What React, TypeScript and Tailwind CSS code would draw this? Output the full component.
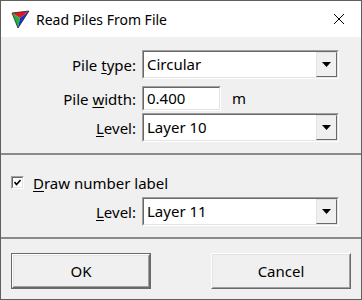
import React from "react";

const font = { fontFamily: '"Noto Sans", "Open Sans", sans-serif' };

function Combo({ value }: { value: string }) {
  return (
    <div className="w-[197px] h-[29px] border border-t-[#a0a0a0] border-l-[#a0a0a0] border-b-white border-r-white">
      <div className="w-full h-full border border-t-[#696969] border-l-[#696969] border-b-[#e3e3e3] border-r-[#e3e3e3] bg-white flex">
        <div className="flex-1 flex items-center pl-[3px] text-[15px] text-black">{value}</div>
        <div className="w-[21px] h-full bg-[#f0f0f0] border border-t-[#e3e3e3] border-l-[#e3e3e3] border-b-[#696969] border-r-[#696969] flex items-center justify-center">
          <svg width="9" height="5" viewBox="0 0 9 5">
            <polygon points="0,0 9,0 4.5,5" fill="#000" />
          </svg>
        </div>
      </div>
    </div>
  );
}

function Label({ first, u, rest }: { first: string; u: string; rest: string }) {
  return (
    <span className="text-[15px] text-black whitespace-pre">
      {first}
      <span className="underline underline-offset-2">{u}</span>
      {rest}
    </span>
  );
}

function Sep() {
  return (
    <div className="flex flex-col">
      <div className="h-px bg-[#8a8a8a]" />
      <div className="h-px bg-[#8a8a8a]" />
    </div>
  );
}

export default function App() {
  return (
    <div style={font} className="w-[362px] h-[300px] border border-[#5f5f5f] flex flex-col bg-[#f0f0f0] overflow-hidden">
      {/* Title bar */}
      <div className="h-[36px] bg-white flex items-center">
        <div className="ml-[10px] w-[19px] h-[19px]">
          <svg width="19" height="19" viewBox="0 0 19 19">
            <polygon points="1,3 18,1 9,8" fill="#e8141b" />
            <polygon points="1,3 9,8 7,18" fill="#1fb53b" />
            <polygon points="18,1 9,8 7,18" fill="#1c2fd6" />
            <polygon points="1,3 18,1 7,18" fill="none" stroke="#222" strokeWidth="0.8" />
          </svg>
        </div>
        <span className="ml-[6px] text-[14px] text-black">Read Piles From File</span>
        <div className="ml-auto mr-[16px] w-[12px] h-[12px]">
          <svg width="12" height="12" viewBox="0 0 12 12">
            <line x1="1" y1="1" x2="11" y2="11" stroke="#000" strokeWidth="1" />
            <line x1="11" y1="1" x2="1" y2="11" stroke="#000" strokeWidth="1" />
          </svg>
        </div>
      </div>

      {/* Section 1 */}
      <div className="h-[116px] pt-[13px] flex flex-col">
        <div className="flex items-center">
          <div className="w-[135px] text-right"><Label first="Pile " u="t" rest="ype:" /></div>
          <div className="ml-[6px]"><Combo value="Circular" /></div>
        </div>
        <div className="flex items-center mt-[7px]">
          <div className="w-[135px] text-right"><Label first="Pile " u="w" rest="idth:" /></div>
          <div className="ml-[6px] w-[79px] h-[25px] border border-t-[#a0a0a0] border-l-[#a0a0a0] border-b-white border-r-white">
            <div className="w-full h-full border border-t-[#696969] border-l-[#696969] border-b-[#e3e3e3] border-r-[#e3e3e3] bg-white flex items-center pl-[3px] text-[15px] text-black">0.400</div>
          </div>
          <span className="ml-[11px] text-[15px] text-black">m</span>
        </div>
        <div className="flex items-center mt-[2px]">
          <div className="w-[135px] text-right"><Label first="" u="L" rest="evel:" /></div>
          <div className="ml-[6px]"><Combo value="Layer 10" /></div>
        </div>
      </div>

      <Sep />

      {/* Section 2 */}
      <div className="h-[82px] pt-[20px] flex flex-col">
        <div className="flex items-center ml-[10px] h-[15px]">
          <div className="w-[13px] h-[13px] border border-t-[#a0a0a0] border-l-[#a0a0a0] border-b-white border-r-white">
            <div className="w-full h-full border border-t-[#696969] border-l-[#696969] border-b-[#e3e3e3] border-r-[#e3e3e3] bg-white flex items-center justify-center">
              <svg width="7" height="7" viewBox="0 0 7 7">
                <polyline points="0.5,3 2.5,5.5 6.5,1" fill="none" stroke="#000" strokeWidth="1.6" />
              </svg>
            </div>
          </div>
          <span className="ml-[9px]"><Label first="" u="D" rest="raw number label" /></span>
        </div>
        <div className="flex items-center mt-[7px]">
          <div className="w-[135px] text-right"><Label first="" u="L" rest="evel:" /></div>
          <div className="ml-[6px]"><Combo value="Layer 11" /></div>
        </div>
      </div>

      <Sep />

      {/* Buttons */}
      <div className="flex-1 flex items-start pt-[14px] px-[10px] justify-between">
        <div className="w-[140px] h-[36px] border border-[#696969]">
          <div className="w-full h-full border border-t-white border-l-white border-b-[#696969] border-r-[#696969]">
            <div className="w-full h-full border border-t-[#e3e3e3] border-l-[#e3e3e3] border-b-[#a0a0a0] border-r-[#a0a0a0] flex items-center justify-center text-[15px] text-black">OK</div>
          </div>
        </div>
        <div className="w-[140px] h-[36px] border border-t-white border-l-white border-b-[#696969] border-r-[#696969]">
          <div className="w-full h-full border border-t-[#e3e3e3] border-l-[#e3e3e3] border-b-[#a0a0a0] border-r-[#a0a0a0] flex items-center justify-center text-[15px] text-black">Cancel</div>
        </div>
      </div>
    </div>
  );
}
